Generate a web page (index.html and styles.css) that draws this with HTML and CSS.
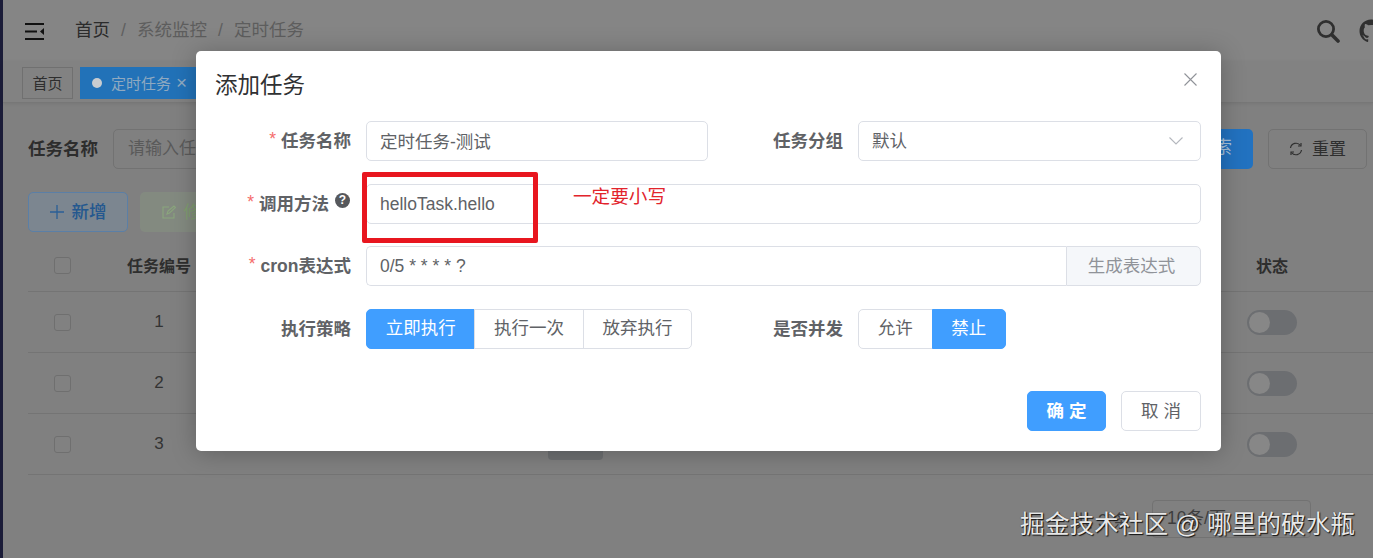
FILE: index.html
```html
<!DOCTYPE html>
<html lang="zh-CN">
<head>
<meta charset="utf-8">
<title>定时任务</title>
<link rel="stylesheet" href="styles.css">
</head>
<body>
<div class="app">
  <aside class="sidebar"></aside>
  <div class="main">
    <header class="navbar">
      <svg class="hamburger" viewBox="0 0 19 17" width="19" height="17"><rect width="19" height="2"/><rect y="7.5" width="12" height="2"/><rect y="15" width="19" height="2"/><polygon points="19,5 15,8.500 19,12"/></svg>
      <nav class="crumbs">
        <span class="crumb-home">首页</span><span class="sep">/</span><span>系统监控</span><span class="sep">/</span><span>定时任务</span>
      </nav>
      <div class="nav-tools">
        <svg class="tool" viewBox="0 0 24 24" width="24" height="24"><circle cx="10" cy="10" r="7.6" fill="none" stroke="#2f2f2f" stroke-width="2.8"/><line x1="15.8" y1="15.8" x2="22" y2="22" stroke="#2f2f2f" stroke-width="3.6" stroke-linecap="round"/></svg>
        <svg class="tool" viewBox="0 0 24 24" width="24" height="24"><path fill="#2f2f2f" d="M12 .5C5.6.5.5 5.6.5 12c0 5.1 3.3 9.4 7.9 10.9.6.1.8-.2.8-.6v-2c-3.200.7-3.900-1.500-3.900-1.500-.5-1.300-1.300-1.700-1.300-1.700-1-.7.1-.7.1-.7 1.200.1 1.800 1.200 1.800 1.200 1 1.800 2.700 1.300 3.400 1 .1-.8.400-1.300.7-1.600-2.600-.3-5.300-1.300-5.300-5.700 0-1.300.5-2.300 1.200-3.100-.1-.3-.5-1.500.1-3.100 0 0 1-.3 3.200 1.200a11 11 0 0 1 5.800 0c2.200-1.500 3.200-1.200 3.200-1.200.6 1.600.2 2.800.1 3.100.7.8 1.200 1.800 1.200 3.100 0 4.400-2.700 5.400-5.300 5.700.4.4.8 1.100.8 2.200v3.200c0 .3.2.7.8.6 4.600-1.500 7.900-5.800 7.900-10.900C23.500 5.600 18.400.5 12 .5z"/></svg>
      </div>
    </header>
    <div class="tagsbar">
      <span class="tag">首页</span>
      <span class="tag tag-active"><i class="dot"></i>定时任务<span class="tag-x">×</span></span>
    </div>
    <section class="content">
      <form class="query">
        <label class="query-label">任务名称</label>
        <span class="query-input">请输入任务名称</span>
        <span class="btn-search">搜索</span>
        <span class="btn-reset">
          <svg viewBox="0 0 14 14" width="14" height="14"><path d="M1.500 6A5.600 5.600 0 0 1 11.500 3.500M12.500 8A5.600 5.600 0 0 1 2.500 10.500" fill="none" stroke="#2f2f2f" stroke-width="1.200"/><path d="M12 1v3h-3M2 13v-3h3" fill="none" stroke="#2f2f2f" stroke-width="1.200"/></svg>
          <span class="lift">重置</span>
        </span>
      </form>
      <div class="actions">
        <span class="btn-add">
          <svg viewBox="0 0 14 14" width="14" height="14"><path d="M7 0v14M0 7h14" stroke="#2a5f96" stroke-width="1.300"/></svg>
          <span class="lift">新增</span>
        </span>
        <span class="btn-edit">
          <svg viewBox="0 0 14 14" width="14" height="14"><path d="M12 8v5H1V2h6M5 9l1-3 6-5 1.500 1.500L7.500 8z" fill="none" stroke="#8aa67c" stroke-width="1.100"/></svg>
          <span class="lift">修改</span>
        </span>
      </div>
      <div class="table">
        <div class="tr thead">
          <span class="td"><i class="check"></i></span><span class="td">任务编号</span><span class="td"></span><span class="td"></span><span class="td"></span><span class="td"></span><span class="td">状态</span>
        </div>
        <div class="tr">
          <span class="td"><i class="check"></i></span><span class="td">1</span><span class="td"></span><span class="td"></span><span class="td"></span><span class="td"></span><span class="td"><i class="switch"></i></span>
        </div>
        <div class="tr">
          <span class="td"><i class="check"></i></span><span class="td">2</span><span class="td"></span><span class="td"></span><span class="td"></span><span class="td"></span><span class="td"><i class="switch"></i></span>
        </div>
        <div class="tr">
          <span class="td"><i class="check"></i></span><span class="td">3</span><span class="td"></span><span class="td"><i class="grp"></i></span><span class="td"></span><span class="td"></span><span class="td"><i class="switch"></i></span>
        </div>
      </div>
      <div class="pager">
        <span class="total">共 3 条</span>
        <span class="size">10条/页</span>
      </div>
    </section>
  </div>
</div>

<div class="dialog">
  <header class="dlg-head">
    <h2>添加任务</h2>
    <svg class="dlg-close" viewBox="0 0 13 13" width="13" height="13"><path d="M.5.5l12 12M12.500.5l-12 12" stroke="#909399" stroke-width="1.100"/></svg>
  </header>
  <div class="dlg-form">
    <label class="lbl"><b>*</b>任务名称</label>
    <div class="input input-cjk">定时任务-测试</div>
    <label class="lbl">任务分组</label>
    <div class="input select">默认
      <svg viewBox="0 0 14 8" width="14" height="8"><path d="M.5.5L7 7 13.500.5" fill="none" stroke="#b4b7bd" stroke-width="1.100"/></svg>
    </div>

    <label class="lbl"><b>*</b>调用方法<i class="help">?</i></label>
    <div class="input span3">helloTask.hello</div>

    <label class="lbl"><b>*</b>cron表达式</label>
    <div class="group span3">
      <div class="input in-group">0/5 * * * * ?</div>
      <div class="append">生成表达式</div>
    </div>

    <label class="lbl">执行策略</label>
    <div class="radios">
      <span class="radio on r-w">立即执行</span><span class="radio r-w">执行一次</span><span class="radio r-w">放弃执行</span>
    </div>
    <label class="lbl">是否并发</label>
    <div class="radios">
      <span class="radio r-n">允许</span><span class="radio on r-n">禁止</span>
    </div>
  </div>
  <footer class="dlg-foot">
    <span class="btn primary">确 定</span>
    <span class="btn">取 消</span>
  </footer>
</div>

<div class="mark-box"></div>
<div class="mark-text">一定要小写</div>
<div class="watermark">掘金技术社区 @ 哪里的破水瓶</div>
</body>
</html>
```
FILE: styles.css
```css
* { box-sizing: border-box; }
html, body { margin: 0; height: 100%; overflow: hidden; }
body {
  width: 1373px;
  height: 558px;
  position: relative;
  background: #808080;
  font-family: "Liberation Sans", "Noto Sans CJK SC", sans-serif;
  color: #333;
}
i, em { font-style: normal; }

.app { display: flex; height: 558px; overflow: hidden; }
.sidebar { width: 3px; flex: none; background: #1b1c38; }
.main { flex: 1; min-width: 0; }

.navbar {
  height: 61px;
  display: flex;
  align-items: center;
  padding-left: 22px;
  background: #858585;
}
.hamburger { fill: #111; flex: none; margin-top: 1px; }
.crumbs {
  display: flex;
  align-items: center;
  margin-left: 31px;
  padding-bottom: 1px;
  font-size: 17.500px;
  line-height: 24px;
  color: #5d5d5d;
}
.crumb-home { color: #2b2b2b; }
.sep { width: 27px; text-align: center; color: #5f5f5f; font-family: "Liberation Sans", sans-serif; }
.nav-tools { margin-left: auto; display: flex; gap: 19px; margin-right: -10px; margin-top: 1px; }
.tool { flex: none; }

.tagsbar {
  height: 42px;
  display: flex;
  gap: 7px;
  padding: 6px 0 0 19px;
  background: #828282;
  border-bottom: 1px solid #777;
  box-shadow: 0 1px 3px rgba(0, 0, 0, .08);
}
.tag {
  height: 32px;
  width: 51px;
  display: flex;
  align-items: center;
  justify-content: center;
  padding-bottom: 2px;
  border: 1px solid #707070;
  font-size: 15px;
  color: #2e2e2e;
}
.tag-active {
  width: 140px;
  justify-content: flex-start;
  padding-left: 11px;
  border-color: #2272b8;
  background: #2272b8;
  color: #8fa9c0;
}
.dot { width: 10px; height: 10px; border-radius: 50%; background: #c8ccd0; margin: 2px 9px 0 0; }
.tag-x { margin-left: 5px; font-size: 19px; line-height: 1; }

.content { padding: 26px 0 0 25px; }
.lift { display: block; margin-top: -3px; }
.query { display: flex; align-items: center; height: 40px; }
.query-label { font-size: 17.500px; font-weight: 700; color: #2d2d2d; width: 85px; padding-bottom: 3px; }
.query-input {
  width: 260px;
  height: 40px;
  line-height: 37px;
  padding-left: 14px;
  border: 1px solid #727272;
  border-radius: 5px;
  font-size: 17px;
  color: #5a5a5a;
}
.btn-search {
  margin-left: auto;
  width: 100px;
  height: 40px;
  border-radius: 5px;
  background: #2272c0;
  color: #a9c2da;
  font-size: 17.500px;
  line-height: 37px;
  padding-left: 44px;
}
.btn-reset {
  margin: 0 6px 0 15px;
  width: 99px;
  height: 40px;
  display: flex;
  align-items: center;
  justify-content: center;
  gap: 9px;
  border: 1px solid #727272;
  border-radius: 5px;
  font-size: 17px;
  color: #2e2e2e;
}
.actions { display: flex; gap: 12px; margin-top: 23px; }
.btn-add, .btn-edit {
  width: 100px;
  height: 40px;
  display: flex;
  align-items: center;
  justify-content: center;
  gap: 8px;
  border-radius: 5px;
  font-size: 17.500px;
}
.btn-add { background: #7c8690; border: 1px solid #5b7fa6; color: #24588f; font-weight: 500; }
.btn-edit { background: #838a80; color: #7e9c6f; }

.table { margin-top: 13px; }
.tr {
  display: grid;
  grid-template-columns: 68px 126px 273px 160px 220px 297px 200px;
  align-items: center;
  height: 61px;
  border-bottom: 1px solid #747474;
  font-size: 17px;
  color: #333;
  text-align: center;
}
.thead { height: 47px; padding-bottom: 6px; font-size: 16px; font-weight: 700; color: #2e2e2e; }
.check {
  display: block;
  width: 17px;
  height: 17px;
  margin: 0 auto;
  border: 1px solid #6f6f6f;
  border-radius: 3px;
  background: #818181;
}
.grp {
  display: block;
  width: 55px;
  height: 32px;
  margin: 0 auto;
  border-radius: 4px;
  background: #6e7072;
}
.switch {
  display: block;
  position: relative;
  width: 50px;
  height: 25px;
  margin: 0 auto;
  border-radius: 13px;
  background: #6c6e71;
}
.switch::after {
  content: "";
  position: absolute;
  left: 2px;
  top: 2px;
  width: 21px;
  height: 21px;
  border-radius: 50%;
  background: #878787;
}
.pager {
  display: flex;
  justify-content: flex-end;
  align-items: center;
  gap: 22px;
  margin-top: 25px;
  padding-right: 62px;
  font-size: 17.500px;
  color: #3d3d3d;
}
.size {
  width: 159px;
  height: 38px;
  line-height: 34px;
  padding-left: 14px;
  border: 1px solid #727272;
  border-radius: 4px;
}

/* dialog */
.dialog {
  position: absolute;
  left: 196px;
  top: 51px;
  width: 1025px;
  height: 400px;
  display: flex;
  flex-direction: column;
  background: #fff;
  border-radius: 5px;
  box-shadow: 0 2px 25px rgba(0, 0, 0, .25);
}
.dlg-head { height: 70px; padding: 20px 24px 0 19px; display: flex; justify-content: space-between; align-items: flex-start; }
.dlg-head h2 { margin: 0; font-size: 22.500px; font-weight: 400; line-height: 30px; color: #303133; }
.dlg-close { margin-top: 2px; }
.dlg-form {
  display: grid;
  grid-template-columns: 135px 342px 120px 343px;
  grid-auto-rows: 40px;
  column-gap: 15px;
  row-gap: 22.500px;
  padding: 0 20px;
  align-items: center;
}
.span3 { grid-column: span 3; }
.lbl {
  display: flex;
  justify-content: flex-end;
  align-items: center;
  white-space: nowrap;
  font-size: 17.500px;
  font-weight: 700;
  color: #606266;
  height: 40px;
  margin-top: -3px;
}
.lbl b { color: #f56c6c; font-weight: 400; margin-right: 5px; }
.help {
  flex: none;
  width: 15px;
  height: 15px;
  margin: -4px 1px 0 6px;
  border-radius: 50%;
  background: #56585c;
  color: #fff;
  font-size: 12px;
  line-height: 15px;
  font-weight: 700;
  text-align: center;
}
.input {
  height: 40px;
  line-height: 38px;
  padding: 0 13px;
  border: 1px solid #dcdfe6;
  border-radius: 5px;
  font-size: 17.500px;
  color: #606266;
}
.input-cjk { line-height: 41px; }
.select { display: flex; justify-content: space-between; align-items: center; padding-right: 17px; }
.group { display: flex; height: 40px; }
.in-group { flex: 1; border-right: 0; border-radius: 5px 0 0 5px; }
.append {
  width: 135px;
  padding-right: 4px;
  border: 1px solid #dcdfe6;
  border-radius: 0 5px 5px 0;
  background: #f5f7fa;
  color: #909399;
  font-size: 17.500px;
  line-height: 38px;
  text-align: center;
}
.radios { display: flex; height: 40px; }
.radio {
  display: block;
  height: 40px;
  line-height: 36px;
  text-align: center;
  font-size: 17.500px;
  color: #606266;
  border: 1px solid #dcdfe6;
  margin-left: -1px;
}
.radio:first-child { margin-left: 0; border-radius: 5px 0 0 5px; }
.radio:last-child { border-radius: 0 5px 5px 0; }
.r-w { width: 109.400px; }
.r-n { width: 74.500px; }
.radio.on { background: #409eff; border-color: #409eff; color: #fff; }
.dlg-foot { margin-top: auto; padding: 0 20px 20px; display: flex; justify-content: flex-end; gap: 15px; }
.btn {
  width: 80px;
  height: 40px;
  line-height: 38px;
  text-align: center;
  border: 1px solid #dcdfe6;
  border-radius: 5px;
  font-size: 17.500px;
  color: #606266;
}
.primary { width: 79px; background: #409eff; border-color: #409eff; color: #fff; font-weight: 700; }

/* annotation layered on the screenshot */
.mark-box {
  position: absolute;
  left: 362px;
  top: 172px;
  width: 176px;
  height: 71px;
  border: 5px solid #e8161f;
  border-radius: 2px;
}
.mark-text {
  position: absolute;
  left: 573px;
  top: 184px;
  font-size: 18.600px;
  line-height: 26px;
  color: #e2242c;
}
.watermark {
  position: absolute;
  left: 1020px;
  top: 509px;
  white-space: nowrap;
  font-size: 24.700px;
  line-height: 32px;
  color: #e8e8e8;
  text-shadow: 1px 1px 1px #111, 0 0 1px #333;
}
```
